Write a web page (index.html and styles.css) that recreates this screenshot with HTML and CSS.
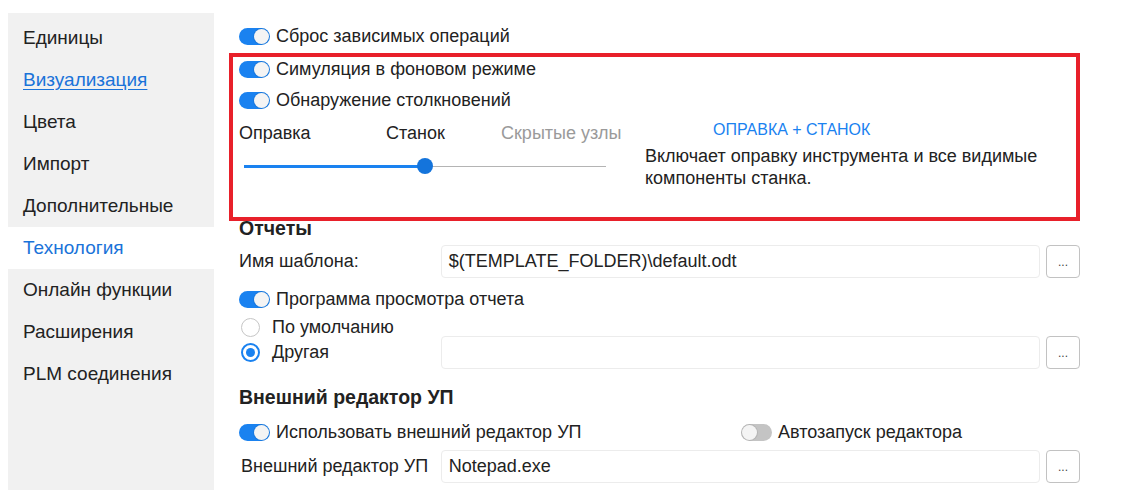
FILE: index.html
```html
<!DOCTYPE html>
<html lang="ru">
<head>
<meta charset="utf-8">
<link rel="stylesheet" href="styles.css">
</head>
<body>
<div class="page">
  <nav class="sidebar">
    <div class="nav-item">Единицы</div>
    <div class="nav-item link">Визуализация</div>
    <div class="nav-item">Цвета</div>
    <div class="nav-item">Импорт</div>
    <div class="nav-item">Дополнительные</div>
    <div class="nav-item active">Технология</div>
    <div class="nav-item">Онлайн функции</div>
    <div class="nav-item">Расширения</div>
    <div class="nav-item">PLM соединения</div>
  </nav>
  <main class="content">
    <div class="row toggle-row r1"><span class="toggle on"></span><span>Сброс зависимых операций</span></div>
    <div class="row toggle-row r2"><span class="toggle on"></span><span>Симуляция в фоновом режиме</span></div>
    <div class="row toggle-row r3"><span class="toggle on"></span><span>Обнаружение столкновений</span></div>
    <div class="slider-block">
      <div class="slider-left">
        <div class="slider-labels">
          <span>Оправка</span>
          <span>Станок</span>
          <span class="muted">Скрытые узлы</span>
        </div>
        <div class="track">
          <div class="track-fill"></div>
          <div class="knob"></div>
        </div>
      </div>
      <div class="slider-right">
        <div class="mode">ОПРАВКА + СТАНОК</div>
        <div class="desc">Включает оправку инструмента и все видимые компоненты станка.</div>
      </div>
    </div>
    <h2 class="heading h-reports">Отчеты</h2>
    <div class="field-row fr1">
      <span class="label">Имя шаблона:</span>
      <div class="input">$(TEMPLATE_FOLDER)\default.odt</div>
      <div class="btn">...</div>
    </div>
    <div class="row toggle-row r4"><span class="toggle on"></span><span>Программа просмотра отчета</span></div>
    <div class="radio-row rr1"><span class="radio"></span><span>По умолчанию</span></div>
    <div class="field-row fr2">
      <div class="radio-inline"><span class="radio checked"></span><span>Другая</span></div>
      <div class="input"></div>
      <div class="btn">...</div>
    </div>
    <h2 class="heading h-editor">Внешний редактор УП</h2>
    <div class="row pair-row">
      <div class="toggle-row"><span class="toggle on"></span><span>Использовать внешний редактор УП</span></div>
      <div class="toggle-row auto"><span class="toggle off"></span><span>Автозапуск редактора</span></div>
    </div>
    <div class="field-row fr3">
      <span class="label lbl2">Внешний редактор УП</span>
      <div class="input">Notepad.exe</div>
      <div class="btn">...</div>
    </div>
  </main>
</div>
<div class="highlight"></div>
</body>
</html>
```
FILE: styles.css
```css
* { box-sizing: border-box; }
html, body { margin: 0; padding: 0; background: #fff; }
body {
  font-family: "Liberation Sans", Arial, sans-serif;
  color: #222;
  width: 1135px;
  height: 499px;
  overflow: hidden;
  position: relative;
}
.page {
  display: flex;
  padding: 13px 0 0 8px;
}
.sidebar {
  width: 206px;
  height: 477px;
  background: #f1f1f1;
  padding-top: 4px;
  display: flex;
  flex-direction: column;
}
.nav-item {
  height: 42px;
  line-height: 42px;
  padding-left: 15px;
  font-size: 19px;
  color: #222;
}
.nav-item.link { color: #1a73d9; text-decoration: underline; text-underline-offset: 3px; }
.nav-item.active { background: #fff; color: #1a73d9; }

.content {
  padding-left: 25px;
  display: flex;
  flex-direction: column;
  width: 866px;
}
.row { display: flex; align-items: center; }
.toggle-row {
  display: flex;
  align-items: center;
  height: 24px;
  font-size: 18px;
  color: #222;
}
.toggle {
  width: 31px;
  height: 17px;
  border-radius: 9px;
  margin-right: 6px;
  position: relative;
  flex: none;
}
.toggle.on { background: #1a82f0; }
.toggle.off { background: #c4c4c4; }
.toggle::after {
  content: "";
  position: absolute;
  top: 1px;
  width: 15px;
  height: 15px;
  border-radius: 50%;
  background: #f4f4f4;
  box-shadow: 0 0 0 1px rgba(0,0,0,0.08);
}
.toggle.on::after { right: 1px; }
.toggle.off::after { left: 1px; }

.r1 { margin-top: 11px; }
.r2 { margin-top: 9px; }
.r3 { margin-top: 7px; }

.slider-block { display: flex; margin-top: 9px; }
.slider-left { width: 406px; }
.slider-labels {
  display: grid;
  grid-template-columns: 147px 115px auto;
  font-size: 18px;
  height: 24px;
  line-height: 24px;
}
.muted { color: #9a9a9a; }
.track {
  margin: 21px 0 0 5px;
  width: 362px;
  height: 1px;
  background: #b4b4b4;
  position: relative;
}
.track-fill {
  position: absolute;
  left: 0;
  top: -1px;
  width: 181px;
  height: 3px;
  background: #1a82f0;
}
.knob {
  position: absolute;
  left: 173px;
  top: -8px;
  width: 16px;
  height: 16px;
  border-radius: 50%;
  background: #1474dc;
}
.mode {
  padding-left: 68px;
  color: #1a82f0;
  font-size: 16px;
  height: 20px;
  line-height: 20px;
  margin-top: -1px;
}
.desc {
  width: 420px;
  font-size: 18px;
  line-height: 22px;
  margin-top: 5px;
  color: #222;
}

.heading {
  margin: 0;
  font-size: 19.5px;
  font-weight: bold;
  color: #222;
  height: 22px;
  line-height: 22px;
}
.h-reports { margin-top: 28px; }
.field-row { display: flex; align-items: center; height: 33px; }
.fr1 { margin-top: 6px; }
.label { width: 202px; font-size: 18px; color: #222; }
.lbl2 { padding-left: 2px; }
.input {
  width: 600px;
  height: 33px;
  border: 1px solid #ececec;
  border-radius: 4px;
  font-size: 18px;
  line-height: 31px;
  padding-left: 7px;
  color: #222;
}
.btn {
  margin-left: 6px;
  width: 34px;
  height: 33px;
  border: 1px solid #c2c2c2;
  border-radius: 4px;
  font-size: 12px;
  text-align: center;
  line-height: 32px;
  color: #444;
}
.r4 { margin-top: 9px; }
.radio-row, .radio-inline {
  display: flex;
  align-items: center;
  font-size: 18px;
  color: #222;
}
.radio-row { height: 24px; margin-top: 4px; }
.radio-inline { width: 202px; }
.radio {
  width: 19px;
  height: 19px;
  border-radius: 50%;
  border: 1.5px solid #c6c6c6;
  margin: 0 12px 0 2px;
  background: #fff;
  flex: none;
  position: relative;
}
.radio.checked { border: 2px solid #1a82f0; }
.radio.checked::after {
  content: "";
  position: absolute;
  left: 3px; top: 3px;
  width: 9px; height: 9px;
  border-radius: 50%;
  background: #1a82f0;
}
.fr2 { margin-top: -3px; }
.h-editor { margin-top: 17px; }
.pair-row { margin-top: 12px; }
.pair-row .toggle-row:first-child { width: 502px; }
.fr3 { margin-top: 6px; }

.highlight {
  position: absolute;
  left: 229px;
  top: 53px;
  width: 851px;
  height: 168px;
  border: 4px solid #e8202a;
  pointer-events: none;
}
```
